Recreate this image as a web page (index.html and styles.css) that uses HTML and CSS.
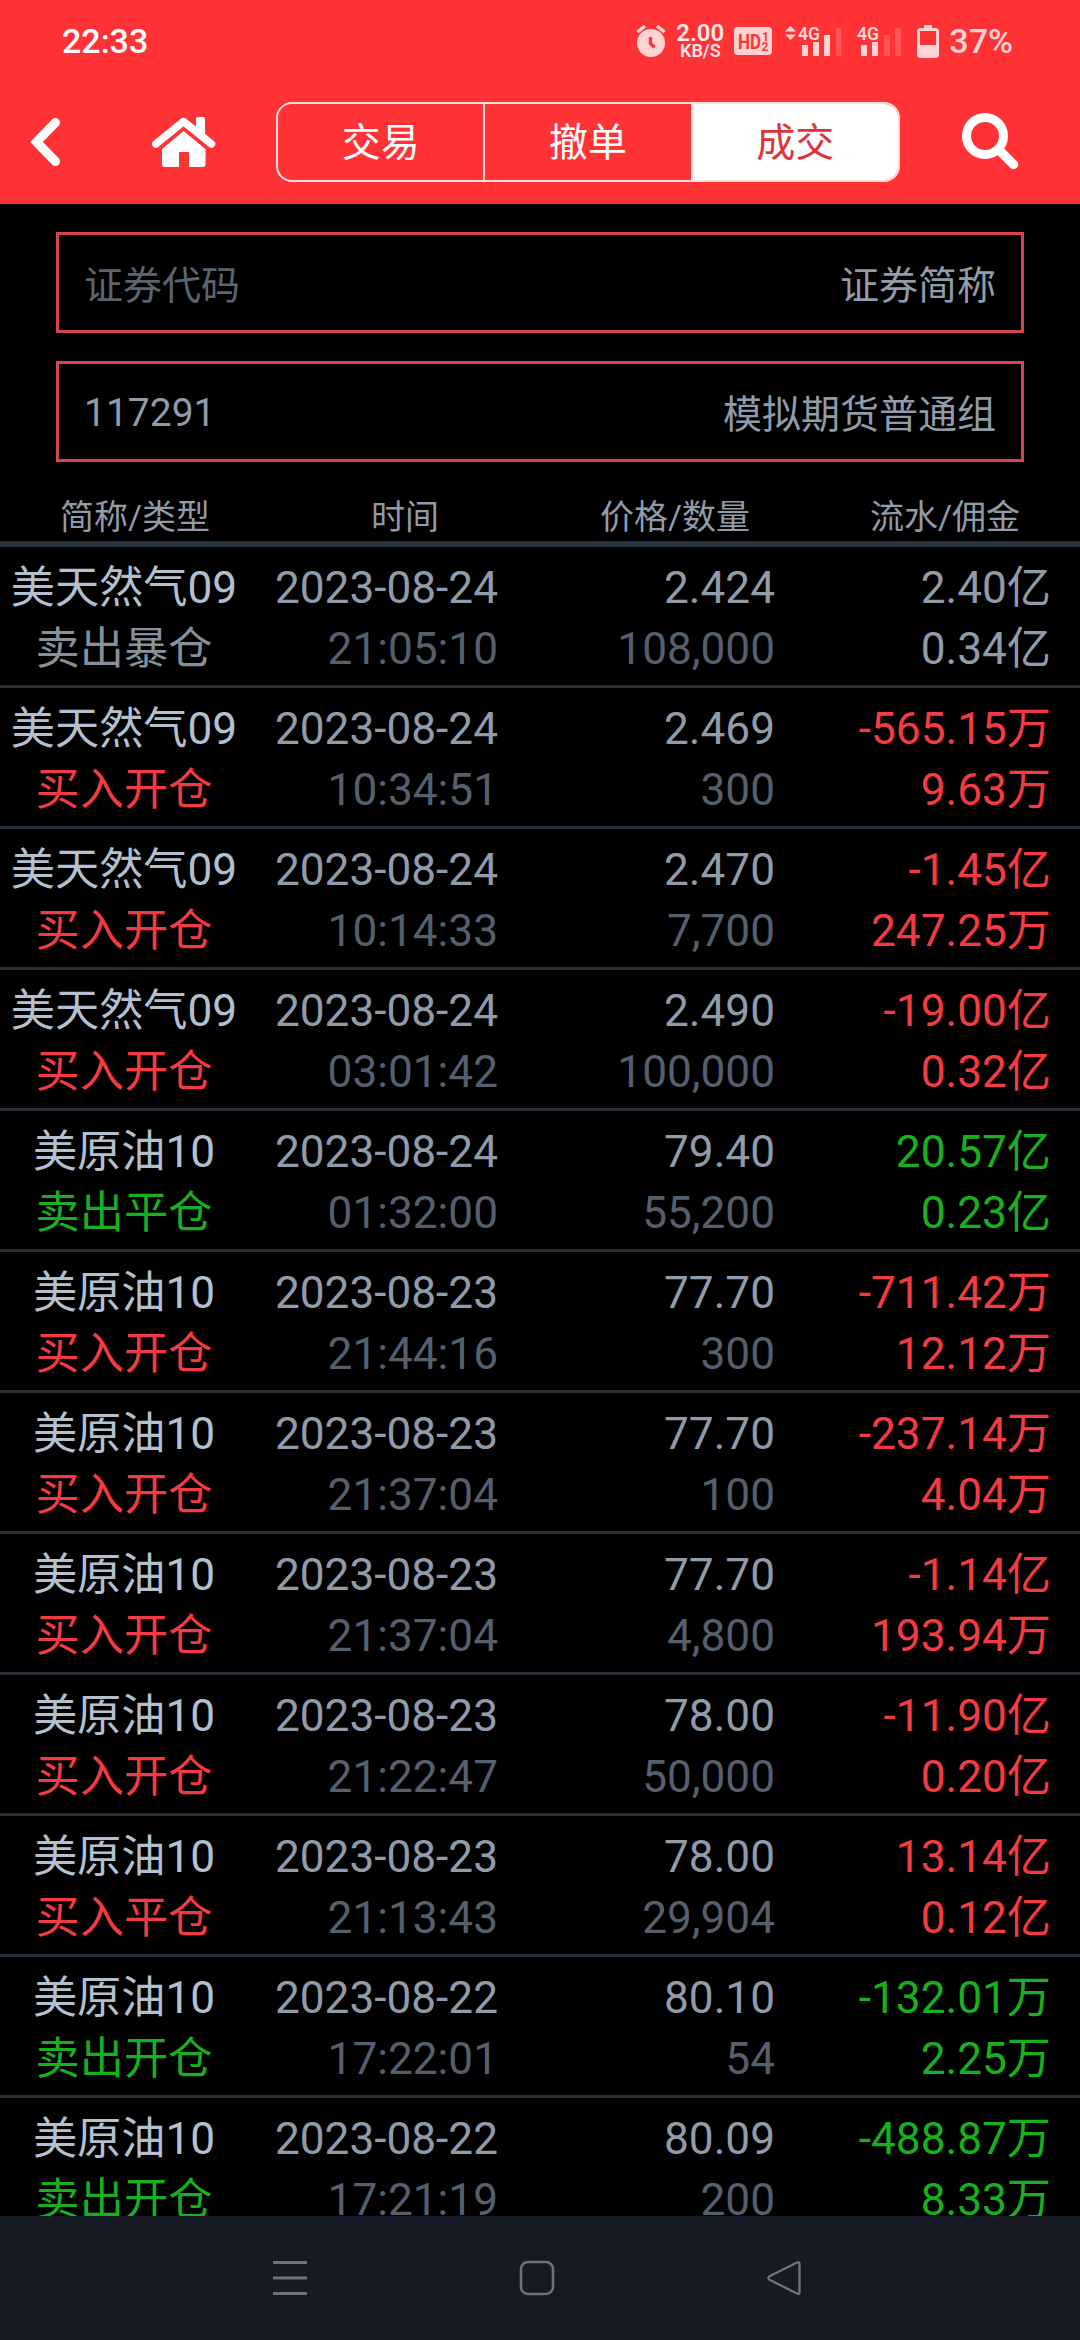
FILE: index.html
```html
<!DOCTYPE html>
<html lang="zh-CN">
<head>
  <meta charset="UTF-8">
  <meta name="viewport" content="width=device-width, initial-scale=1.0">
  <title>成交</title>
  <link rel="stylesheet" href="styles.css">
</head>
<body>

  <header class="header">
    <!-- status bar -->
    <div class="status">
      <span class="time">22:33</span>
      <div class="status-icons">
        <svg class="alarm" width="30" height="34" viewBox="0 0 30 34">
          <circle cx="15" cy="19" r="14" fill="currentColor"/>
          <path d="M1.500 8L9 2M28.500 8L21 2" stroke="currentColor" stroke-width="3.400" fill="none"/>
          <path d="M14.500 13v6.500l4 4" stroke="#ff3336" stroke-width="3.400" fill="none"/>
        </svg>
        <div class="speed">
          <span class="speed-num">2.00</span>
          <span class="speed-unit">KB/S</span>
        </div>
        <svg class="hd" width="38" height="28" viewBox="0 0 38 28">
          <rect width="38" height="28" rx="4" fill="currentColor"/>
          <g fill="#ff3336" font-family="Roboto, sans-serif" font-weight="700">
            <text x="4" y="21.500" font-size="21" textLength="23" lengthAdjust="spacingAndGlyphs">HD</text>
            <text x="28" y="13.500" font-size="12">1</text>
            <text x="27.500" y="24" font-size="12">2</text>
          </g>
        </svg>
        <svg class="signal-one" width="57" height="32" viewBox="0 0 57 32">
          <path d="M0 6.500L5.500 1l5.500 5.500zM0 9.500h11L5.500 15z" fill="currentColor"/>
          <text x="13" y="15" font-size="19" font-family="Roboto, sans-serif" font-weight="600" fill="currentColor" textLength="22" lengthAdjust="spacingAndGlyphs">4G</text>
          <path d="M17 20h6v11h-6zM28 17h6v14h-6zM39 10h6v21h-6z" fill="currentColor"/>
          <path d="M51 3h5v28h-5z" fill="#ff5558"/>
        </svg>
        <svg class="signal-two" width="45" height="32" viewBox="0 0 45 32">
          <text x="0" y="15" font-size="19" font-family="Roboto, sans-serif" font-weight="600" fill="currentColor" textLength="22" lengthAdjust="spacingAndGlyphs">4G</text>
          <path d="M4 20h6v11H4zM15 17h6v14h-6z" fill="currentColor"/>
          <path d="M27 10h6v21h-6zM38 3h6v28h-6z" fill="#ff5558"/>
        </svg>
        <svg class="battery" width="22" height="33" viewBox="0 0 22 33">
          <path d="M7 0h8v4H7z" fill="currentColor"/>
          <rect x="1.500" y="4.500" width="19" height="27" rx="2" fill="none" stroke="currentColor" stroke-width="3"/>
          <path d="M2 20h18v11H2z" fill="currentColor"/>
        </svg>
        <span class="percent">37%</span>
      </div>
    </div>

    <!-- toolbar -->
    <div class="toolbar">
      <svg class="back" width="30" height="50" viewBox="0 0 30 50">
        <path d="M24.500 5.500L5.500 25l19 19.500" fill="none" stroke="#fff" stroke-width="9" stroke-linecap="round" stroke-linejoin="miter"/>
      </svg>
      <svg class="home" width="64" height="50" viewBox="0 0 64 50">
        <path d="M3.800 27L31.500 4.500 59.500 27" fill="none" stroke="#fff" stroke-width="7.500" stroke-linejoin="round" stroke-linecap="round"/>
        <path d="M44 2q0-2 1.500-2h6q1.500 0 1.500 2v20l-9-7z" fill="#fff"/>
        <path d="M31.500 14L53.500 32v15q0 3-3 3H37V35H27v15H13q-3 0-3-3V32z" fill="#fff"/>
      </svg>
      <nav class="tabs">
        <a class="tab">交易</a>
        <a class="tab">撤单</a>
        <a class="tab active">成交</a>
      </nav>
      <svg class="search" width="57" height="57" viewBox="0 0 57 57">
        <circle cx="23" cy="23" r="18.500" fill="none" stroke="#fff" stroke-width="9"/>
        <path d="M38 38L51.500 51.500" stroke="#fff" stroke-width="9.500" stroke-linecap="round"/>
      </svg>
    </div>
  </header>

  <main class="content">
    <div class="fields">
      <div class="field">
        <span class="placeholder">证券代码</span>
        <span>证券简称</span>
      </div>
      <div class="field">
        <span class="account">117291</span>
        <span>模拟期货普通组</span>
      </div>
    </div>

    <div class="list-head">
      <span>简称/类型</span>
      <span>时间</span>
      <span>价格/数量</span>
      <span>流水/佣金</span>
    </div>
    <div class="list" id="list"></div>
  </main>

  <!-- system buttons -->
  <footer class="navbar">
    <svg width="36" height="36" viewBox="0 0 36 36">
      <path d="M1 2.500h34M1 18h34M1 33.500h34" stroke="#6c727c" stroke-width="2.800"/>
    </svg>
    <svg width="36" height="36" viewBox="0 0 36 36">
      <rect x="2" y="2" width="32" height="32" rx="7" fill="none" stroke="#6c727c" stroke-width="2.600"/>
    </svg>
    <svg width="36" height="36" viewBox="0 0 36 36">
      <path d="M31 2.500L4 16q-3.500 2 0 4L31 33.500q2.500 1 2.500-1.500V4q0-2.500-2.500-1.500z" fill="none" stroke="#6c727c" stroke-width="2.400"/>
    </svg>
  </footer>

  <script>
    // name, type, type color, date, time, price, amount, turnover, fee, money color
    const deals = [
      ["美天然气09", "卖出暴仓", "", "2023-08-24", "21:05:10", "2.424", "108,000", "2.40亿", "0.34亿", ""],
      ["美天然气09", "买入开仓", "red", "2023-08-24", "10:34:51", "2.469", "300", "-565.15万", "9.63万", "red"],
      ["美天然气09", "买入开仓", "red", "2023-08-24", "10:14:33", "2.470", "7,700", "-1.45亿", "247.25万", "red"],
      ["美天然气09", "买入开仓", "red", "2023-08-24", "03:01:42", "2.490", "100,000", "-19.00亿", "0.32亿", "red"],
      ["美原油10", "卖出平仓", "green", "2023-08-24", "01:32:00", "79.40", "55,200", "20.57亿", "0.23亿", "green"],
      ["美原油10", "买入开仓", "red", "2023-08-23", "21:44:16", "77.70", "300", "-711.42万", "12.12万", "red"],
      ["美原油10", "买入开仓", "red", "2023-08-23", "21:37:04", "77.70", "100", "-237.14万", "4.04万", "red"],
      ["美原油10", "买入开仓", "red", "2023-08-23", "21:37:04", "77.70", "4,800", "-1.14亿", "193.94万", "red"],
      ["美原油10", "买入开仓", "red", "2023-08-23", "21:22:47", "78.00", "50,000", "-11.90亿", "0.20亿", "red"],
      ["美原油10", "买入平仓", "red", "2023-08-23", "21:13:43", "78.00", "29,904", "13.14亿", "0.12亿", "red"],
      ["美原油10", "卖出开仓", "green", "2023-08-22", "17:22:01", "80.10", "54", "-132.01万", "2.25万", "green"],
      ["美原油10", "卖出开仓", "green", "2023-08-22", "17:21:19", "80.09", "200", "-488.87万", "8.33万", "green"]
    ];

    document.getElementById("list").innerHTML = deals.map(d => `
      <div class="row">
        <div class="cell name"><p>${d[0]}</p><p class="type ${d[2]}">${d[1]}</p></div>
        <div class="cell"><p>${d[3]}</p><p class="dim">${d[4]}</p></div>
        <div class="cell"><p>${d[5]}</p><p class="dim">${d[6]}</p></div>
        <div class="cell ${d[9]}"><p>${d[7]}</p><p>${d[8]}</p></div>
      </div>`).join("");
  </script>
</body>
</html>
```
FILE: styles.css
```css
* {
  margin: 0;
  padding: 0;
  box-sizing: border-box;
}

body {
  display: flex;
  flex-direction: column;
  height: 2340px;
  width: 1080px;
  overflow: hidden;
  background: #000;
  color: #919ba9;
  font-family: Roboto, "Noto Sans CJK SC", sans-serif;
}

svg {
  display: block;
  flex: none;
  overflow: visible;
}

/* header */
.header {
  height: 204px;
  flex: none;
  background: #ff3336;
  color: #fff;
}

.status {
  display: flex;
  justify-content: space-between;
  height: 82px;
  padding: 0 67px 0 62px;
  align-items: center;
}

.time {
  font-size: 34px;
  font-weight: 500;
}

.status-icons {
  display: flex;
  align-items: center;
  color: #ffd3d3;
}

.speed {
  display: flex;
  flex-direction: column;
  align-items: center;
  width: 48px;
  margin: 0 10px;
  color: #ffe6e6;
  font-weight: 600;
}

.speed-num {
  font-size: 24px;
  line-height: 20px;
}

.speed-unit {
  font-size: 18px;
  line-height: 16px;
}

.signal-one {
  margin: 0 15px 0 13px;
}

.battery {
  margin: 0 10px 0 15px;
}

.percent {
  font-size: 34px;
  font-weight: 500;
}

.toolbar {
  display: flex;
  align-items: center;
  height: 119px;
}

.back {
  margin-left: 31px;
}

.home {
  margin-left: 91px;
}

.tabs {
  display: flex;
  width: 624px;
  height: 80px;
  margin: 0 62px 0 60px;
  border: 2px solid #ffdcdc;
  border-radius: 16px;
  overflow: hidden;
}

.tab {
  flex: 1;
  line-height: 79px;
  text-align: center;
  font-size: 39px;
}

.tab + .tab {
  border-left: 2px solid #ffdcdc;
}

.tab.active {
  background: #fff;
  color: #e03338;
}

/* query fields */
.content {
  flex: 1;
  min-height: 0;
  overflow: hidden;
}

.fields {
  display: flex;
  flex-direction: column;
  gap: 28px;
  padding: 28px 56px 0;
}

.field {
  display: flex;
  justify-content: space-between;
  align-items: center;
  height: 101px;
  padding: 0 25px 2px;
  border: 3px solid #d4454d;
  font-size: 39px;
}

.placeholder {
  color: #5a6571;
}

.account {
  padding-top: 5px;
}

/* deals list */
.list-head {
  display: grid;
  grid-template-columns: repeat(4, 1fr);
  height: 85px;
  padding-top: 30px;
  border-bottom: 6px solid #27323c;
  font-size: 34px;
  line-height: 50px;
  text-align: center;
}

.row {
  display: grid;
  grid-template-columns: 248px 250px 277px 276px;
  height: 141px;
  padding-top: 11px;
  border-bottom: 3px solid #27303a;
  font-size: 44.2px;
  line-height: 61px;
}

.cell {
  text-align: right;
  white-space: nowrap;
}

.name {
  text-align: center;
  color: #b4c0cf;
}

.type {
  color: #87919e;
}

.dim {
  color: #565f6d;
}

.red {
  color: #f43b43;
}

.green {
  color: #18b01e;
}

/* bottom bar */
.navbar {
  display: flex;
  justify-content: space-between;
  height: 124px;
  flex: none;
  padding: 44px 278px 0 272px;
  background: #151a25;
}
```
